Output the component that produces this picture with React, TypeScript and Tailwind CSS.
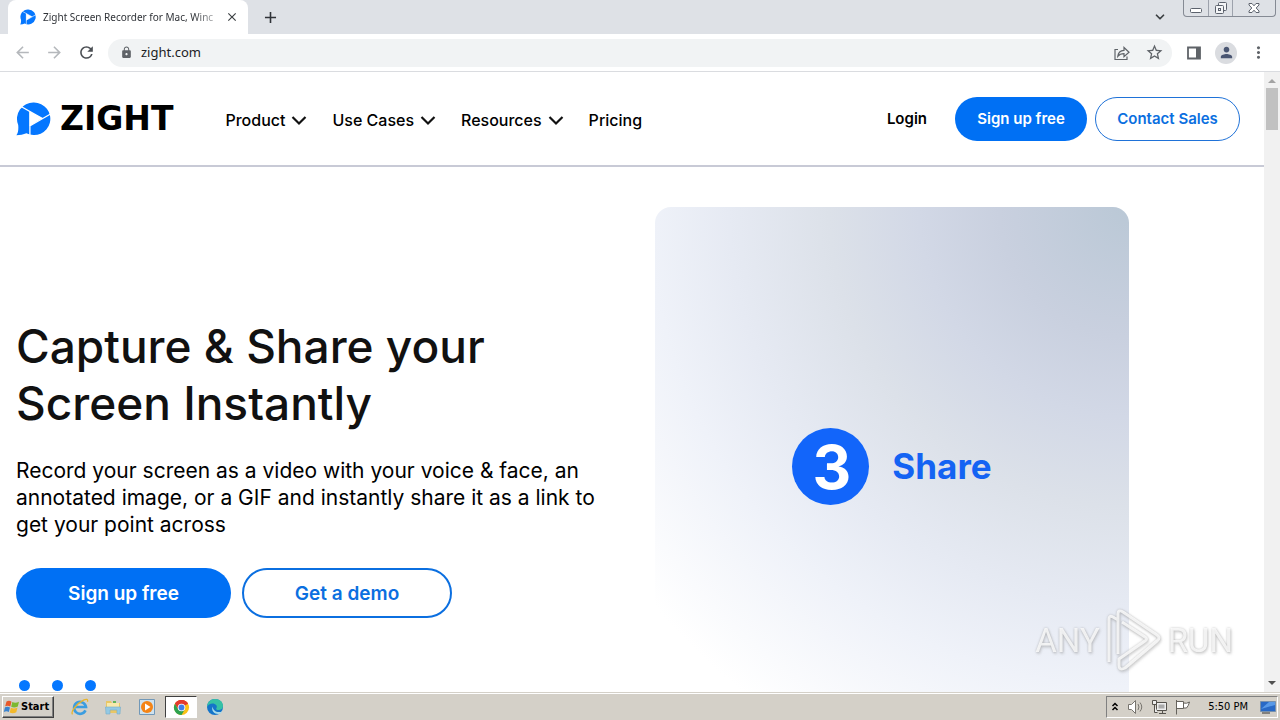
import React from "react";
import { ChevronDown } from "lucide-react";
import { MdArrowBack, MdArrowForward, MdRefresh, MdLock, MdStarBorder, MdPerson, MdMoreVert, MdClose, MdAdd } from "react-icons/md";

const UI_FONT = "font-['DejaVu_Sans_Condensed','Noto_Sans',sans-serif]";

function ZightMark({ className }: { className: string }) {
  return (
    <svg viewBox="0 0 35 34" className={className} aria-hidden="true">
      <path d="M18 0.5a16.3 16.3 0 1 1-7.6 30.7C7.400 32.500 4 33 0.400 33.200 2.200 30.800 2.600 27 2.200 23A16.300 16.300 0 0 1 18 0.500Z" fill="#0577ff" />
      <path d="M13.600 9.600v14.600L26.300 16.300Z" fill="#fff" />
      <path d="M5.500 4.800 26.500 16.600M34.500 12 13.300 24.300M13.900 9.500V33" stroke="#fff" strokeWidth="1.300" fill="none" />
    </svg>
  );
}

function TabStrip() {
  return (
    <div className="flex h-[34px] shrink-0 bg-[#dee1e6] pl-2">
      <div className="flex w-60 items-center rounded-t-lg bg-white pr-2 pl-3">
        <ZightMark className="h-4 w-4 shrink-0" />
        <span className="ml-[7px] flex-1 font-['Noto_Sans',sans-serif] text-[10px] whitespace-nowrap text-[#303338] [mask-image:linear-gradient(to_right,#000_85%,#0003)]">
          Zight Screen Recorder for Mac, Winc
        </span>
        <button aria-label="Close tab" className="ml-1 grid h-4 w-4 place-items-center text-[#3c4043]">
          <MdClose size={14} />
        </button>
      </div>
      <button aria-label="New tab" className="ml-3 grid w-5 place-items-center text-[#303338]">
        <MdAdd size={19} />
      </button>
      <div className="ml-auto flex pr-1">
        <button aria-label="Search tabs" className="mr-[15px] grid w-4 place-items-center text-[#3c4043]">
          <ChevronDown size={14} strokeWidth={3} />
        </button>
        <div className="flex h-[17px] overflow-hidden rounded-b-[4px] border border-t-0 border-[#858a94] text-[#5c626d]">
          <button aria-label="Minimize" className="grid w-6 place-items-center">
            <svg viewBox="0 0 24 16" className="h-4 w-6"><rect x="6.500" y="8.500" width="11" height="4" rx="1" fill="#fff" stroke="currentColor" /></svg>
          </button>
          <button aria-label="Restore" className="grid w-[25px] place-items-center border-x border-[#9da2ac]">
            <svg viewBox="0 0 24 16" className="h-4 w-6" fill="#f4f5f7" stroke="currentColor">
              <rect x="9.500" y="2.500" width="8" height="8" rx="1" />
              <rect x="6.500" y="5.500" width="8" height="8" rx="1" />
              <rect x="9.500" y="8.500" width="2" height="2" />
            </svg>
          </button>
          <button aria-label="Close window" className="grid w-[42px] place-items-center">
            <svg viewBox="0 0 24 16" className="h-4 w-6" fill="#fff" stroke="currentColor">
              <path d="M7 3.500h3l2 2.300 2-2.300h3v1.500L14.200 8l2.800 3v1.500h-3l-2-2.300-2 2.300H7V11l2.800-3L7 5Z" />
            </svg>
          </button>
        </div>
      </div>
    </div>
  );
}

function Toolbar() {
  return (
    <div className="flex h-[38px] shrink-0 items-center border-b border-[#dadce0] bg-white pr-3 pl-3 text-[#5f6368]">
      <button aria-label="Back" className="grid w-5 place-items-center text-[#b5b8bc]"><MdArrowBack size={19} /></button>
      <button aria-label="Forward" className="ml-3 grid w-5 place-items-center text-[#b5b8bc]"><MdArrowForward size={19} /></button>
      <button aria-label="Reload" className="ml-3 grid w-5 place-items-center text-[#4b4f54]"><MdRefresh size={19} /></button>
      <div className="ml-3 flex h-7 flex-1 items-center rounded-full bg-[#f1f3f4] pr-2 pl-3">
        <MdLock size={13} className="shrink-0" />
        <input aria-label="Address" defaultValue="zight.com" className="ml-2 min-w-0 flex-1 bg-transparent font-['Noto_Sans',sans-serif] text-[13px] text-[#202124] outline-none" />
        <button aria-label="Share page" className="mr-[14px]">
          <svg viewBox="0 0 18 18" className="h-[18px] w-[18px]" fill="none" stroke="currentColor" strokeWidth="1.200">
            <path d="M5 5.500H2v10h12v-3M4.800 12.300c.4-3.700 2.700-5.700 6.200-5.900V3.500l5 4.700-5 4.500V9.700c-2.800 0-4.700.8-6.200 2.600Z" />
          </svg>
        </button>
        <button aria-label="Bookmark"><MdStarBorder size={19} /></button>
      </div>
      <button aria-label="Side panel" className="ml-[14px]">
        <svg viewBox="0 0 16 16" className="h-4 w-4" fill="none"><path d="M2 2.500h12v11H2Z" stroke="currentColor" strokeWidth="1.800" /><path d="M10 2h4v12h-4Z" fill="currentColor" /></svg>
      </button>
      <button aria-label="Profile" className="ml-[13px] grid h-[22px] w-[22px] place-items-center rounded-full bg-[#dadce0] text-[#4a5672]"><MdPerson size={17} /></button>
      <button aria-label="Browser menu" className="ml-3"><MdMoreVert size={19} /></button>
    </div>
  );
}

function NavItem({ label, menu }: { label: string; menu?: boolean }) {
  return (
    <a href="#" className="flex items-center gap-[6px] text-black">
      {label}
      {menu && (
        <svg viewBox="0 0 16 16" className="h-4 w-4" fill="none" stroke="#111" strokeWidth="2.200"><path d="m1.500 5 6.500 6.500 6.500-6.500" /></svg>
      )}
    </a>
  );
}

function SiteHeader() {
  return (
    <header className="flex h-[95px] shrink-0 items-center border-b-2 border-[#c8cad6] pr-6 pl-4 text-[15px] font-semibold">
      <a href="#" aria-label="Zight" className="flex items-center gap-[9px] text-black">
        <ZightMark className="h-[34px] w-[35px]" />
        <span className="font-['DejaVu_Sans',sans-serif] text-[33px] leading-8 font-bold">ZIGHT</span>
      </a>
      <nav className="ml-[52px] flex items-center gap-[25px] pt-[2px] text-[16px] font-medium">
        <NavItem label="Product" menu />
        <NavItem label="Use Cases" menu />
        <NavItem label="Resources" menu />
        <NavItem label="Pricing" />
      </nav>
      <div className="ml-auto flex items-center">
        <a href="#" className="mr-7 pt-[2px] text-black">Login</a>
        <a href="#" className="grid h-11 w-33 place-items-center rounded-full bg-[#0070f4] pt-[2px] text-white">Sign up free</a>
        <a href="#" className="ml-2 grid h-11 w-[145px] place-items-center rounded-full border border-[#1f72d8] pt-[2px] text-[#0b6fe0]">Contact Sales</a>
      </div>
    </header>
  );
}

function Hero() {
  return (
    <section className="grid max-w-[1145px] grid-cols-[minmax(0,639fr)_minmax(0,474fr)] px-4 pt-10">
      <div className="pt-[111px]">
        <h1 className="text-[46px] leading-[57px] font-medium text-[#111]">
          Capture &amp; Share your
          <br />
          Screen Instantly
        </h1>
        <p className="mt-[25px] text-[21px] leading-[27px] text-black">
          Record your screen as a video with your voice &amp; face, an
          <br />
          annotated image, or a GIF and instantly share it as a link to
          <br />
          get your point across
        </p>
        <div className="mt-[30px] flex gap-[11px] text-[19px] font-semibold">
          <a href="#" className="grid h-[50px] w-[215px] place-items-center rounded-full bg-[#0070f4] pt-[2px] text-white">Sign up free</a>
          <a href="#" className="grid h-[50px] w-[210px] place-items-center rounded-full border-2 border-[#0b6fe0] pt-[2px] text-[#0b6fe0]">Get a demo</a>
        </div>
        <div className="mt-[62px] flex gap-[22px] pl-[3px]">
          <span className="h-[11px] w-[11px] rounded-full bg-[#0577ff]" />
          <span className="h-[11px] w-[11px] rounded-full bg-[#0577ff]" />
          <span className="h-[11px] w-[11px] rounded-full bg-[#0577ff]" />
        </div>
      </div>
      <div className="flex h-[518px] items-center justify-center gap-[23px] rounded-2xl bg-[radial-gradient(circle_at_top_right,#bac8d6_0px,#c9d0df_130px,#d2d8e6_210px,#dce1e9_300px,#e6eaf3_400px,#eff2f9_480px,#fff_620px)] text-[#1463f3]">
        <span className="grid h-[77px] w-[77px] place-items-center rounded-full bg-[#1265fa] pt-[2px] pl-[2px] text-[60px] leading-none font-bold text-white">3</span>
        <span className="text-[35px] font-bold">Share</span>
      </div>
    </section>
  );
}

function Scrollbar() {
  return (
    <div aria-hidden="true" className="flex w-4 shrink-0 flex-col items-center bg-[#f1f1f1]">
      <svg viewBox="0 0 16 16" className="h-4 w-4"><path d="m4 11 4-4 4 4Z" fill="#a3a3a3" /></svg>
      <div className="h-[42px] w-3 bg-[#c1c1c1]" />
      <svg viewBox="0 0 16 16" className="mt-auto h-4 w-4"><path d="m4 5 4 4 4-4Z" fill="#505050" /></svg>
    </div>
  );
}

function Watermark() {
  return (
    <div className="pointer-events-none absolute right-[47px] bottom-5 flex items-center gap-[5px] font-['Roboto',sans-serif] text-[33px] leading-none font-normal text-white/80 [filter:drop-shadow(0_0_1px_#7778)_drop-shadow(1px_2px_1px_#8885)]">
      <span>ANY</span>
      <svg viewBox="0 0 58 64" className="h-16 w-[58px]" fill="none" stroke="#fff" strokeOpacity=".8" strokeWidth="3" strokeLinejoin="round">
        <path d="M4 54V11q0-4 4-2l5 3v34M13 32V6q0-5 5-2l34 23q4 3 0 6L20 60q-6 3-6-3V51l26-18q3-2 0-4L17 14" />
      </svg>
      <span>RUN</span>
    </div>
  );
}

function IeIcon() {
  return (
    <svg viewBox="0 0 18 18" className="h-[18px] w-[18px]" fill="none">
      <path d="M14.500 12.400A6 6 0 1 1 15 9H4" stroke="#3b9de0" strokeWidth="2.600" />
      <path d="M1.500 16.300C-.8 13.500 6 5.600 12.500 2.200c3-1.500 4.800-1 3.900 1.600" stroke="#e9b52b" strokeWidth="1.300" />
    </svg>
  );
}

function FolderIcon() {
  return (
    <svg viewBox="0 0 18 18" className="h-[18px] w-[18px]">
      <path d="M2 3h5l1 2h8v10H2Z" fill="#e9c765" />
      <path d="M3 5h12v7H3Z" fill="#f8e9ac" />
      <path d="M1.500 9h15l-.5 7h-3v-4H6v4H2Z" fill="#93c9e4" stroke="#76adc9" strokeWidth=".6" />
      <path d="M9 3h3v2H9Z" fill="#62b45b" />
    </svg>
  );
}

function MediaIcon() {
  return (
    <svg viewBox="0 0 18 18" className="h-[18px] w-[18px]">
      <path d="M1.500 1.500h15v15h-15Z" fill="#cfe2ee" stroke="#7198b8" />
      <circle cx="9" cy="9" r="6" fill="#f48416" />
      <path d="m7 5.500 5.500 3.500L7 12.500Z" fill="#fff" />
    </svg>
  );
}

function ChromeIcon() {
  return (
    <svg viewBox="0 0 18 18" className="h-[17px] w-[17px]">
      <circle cx="9" cy="9" r="8" fill="#fbc116" />
      <path d="M9 9 2.070 5A8 8 0 0 1 15.930 5Z" fill="#e33b2e" />
      <path d="M9 5h6.930A8 8 0 0 0 2.070 5L5.500 11Z" fill="#e33b2e" />
      <path d="M2.070 5A8 8 0 0 0 9 17l3.460-6L9 12.500 5.540 11Z" fill="#2da24f" />
      <circle cx="9" cy="9" r="4" fill="#fff" />
      <circle cx="9" cy="9" r="3.100" fill="#3f7ee8" />
    </svg>
  );
}

function EdgeIcon() {
  return (
    <svg viewBox="0 0 18 18" className="h-[18px] w-[18px]">
      <circle cx="9" cy="9" r="8" fill="#1474c9" />
      <path d="M1 9C1.300 4 4.500 1 9 1c5 0 8 3.200 8 7 0 2.600-2 4-4.300 4-2 0-3-.8-2.400-1.600C12 8 9.500 5.500 6.500 5.500 4 5.500 2 6.800 1 9Z" fill="#35c1a5" />
      <path d="M6.600 8.500c-1.600 4.500 2 8 6.400 7.400 1.500-.3 2.700-1.400 3.300-2.500-5 2-9.300-.4-9.700-4.900Z" fill="#a9dbea" />
    </svg>
  );
}

function Taskbar() {
  return (
    <footer className="flex h-7 shrink-0 items-center border-t border-[#d4d0c8] bg-[#d4d0c8] pt-[1px] pr-[2px] pl-[2px] shadow-[inset_0_1px_0_#fff]">
      <button className="flex h-[22px] w-[52px] items-center border border-t-white border-r-[#404040] border-b-[#404040] border-l-white text-[11px] font-bold text-black shadow-[inset_-1px_-1px_0_#808080]">
        <svg viewBox="0 0 18 16" className="h-4 w-[18px] shrink-0">
          <path d="M3.500 2.500c2-1 3.500-.8 5 .2L7.300 7.500c-1.700-1-3.400-1-5.100-.3Z" fill="#e8592b" />
          <path d="M9.300 3c2 1 4 1 6.700-.2l-1.200 4.700c-2.500 1.200-4.700 1.200-6.600.2Z" fill="#7cb82f" />
          <path d="M2 8.200c1.700-.8 3.400-.7 5 .2l-1.200 4.700c-1.500-1-3-1-5-.2Z" fill="#3a83cf" />
          <path d="M7.900 8.800c2 1 4.100.9 6.600-.2l-1.200 4.600c-2.300 1.200-4.500 1.200-6.600.3Z" fill="#f3b92b" />
        </svg>
        Start
      </button>
      <div className="flex items-center pl-[17px]">
        <button aria-label="Internet Explorer" className="mr-[15px]"><IeIcon /></button>
        <button aria-label="File Explorer" className="mr-4"><FolderIcon /></button>
        <button aria-label="Media Player" className="mr-[9px]"><MediaIcon /></button>
        <button aria-label="Chrome" className="mr-[9px] grid h-[22px] w-8 place-items-center border border-t-[#404040] border-r-white border-b-white border-l-[#404040] bg-white"><ChromeIcon /></button>
        <button aria-label="Edge"><EdgeIcon /></button>
      </div>
      <div className="ml-auto flex h-[22px] items-center border border-t-[#808080] border-r-white border-b-white border-l-[#808080] pr-[1px] pl-1 text-[11px] text-black">
        <svg viewBox="0 0 8 12" className="h-3 w-2" fill="none" stroke="#000" strokeWidth="1.500"><path d="m1.500 5 2.500-2.500L6.500 5m-5 4L4 6.500 6.500 9" /></svg>
        <svg viewBox="0 0 18 16" className="ml-2 h-4 w-[18px]" fill="#fff" stroke="#77746e"><path d="M1.500 5.500h3l4-4v13l-4-4h-3Z" /><path d="M11 5q2 3 0 6M13 3.500q3.500 4.500 0 9" fill="none" /></svg>
        <svg viewBox="0 0 18 16" className="ml-[6px] h-4 w-[18px]" fill="#eee" stroke="#55524d"><path d="M5.500 3.500h10v8h-10ZM8 14.500h7M11.500 12v2" /><path d="M7.500 5.500h6v4h-6Z" fill="#aaa" stroke="none" /><path d="M1.500 1.500h4v4h-4ZM3.500 5.500v8h3" /></svg>
        <svg viewBox="0 0 18 16" className="ml-[5px] h-4 w-[18px]" fill="#fff" stroke="#66635d"><path d="M2.500 1v14.500M2.500 2.500h7v7h-7M9.500 4q3 1 6-1-1 4-3 6h-3" /></svg>
        <span className="ml-4">5:50 PM</span>
        <svg viewBox="0 0 16 16" className="ml-3 h-4 w-4"><path d="M.5 2.500h15v10H.5Z" fill="#2869c6" stroke="#7790ac" /><path d="m1 10 8-7h6v3Z" fill="#5899e7" /><path d="M2 14h8" stroke="#333" /></svg>
      </div>
    </footer>
  );
}

export default function App() {
  return (
    <div className={`flex h-screen flex-col overflow-hidden bg-white ${UI_FONT}`}>
      <TabStrip />
      <Toolbar />
      <div className="relative flex min-h-0 flex-1">
        <main className="min-w-0 flex-1 overflow-hidden font-['Inter',sans-serif]">
          <SiteHeader />
          <Hero />
        </main>
        <Scrollbar />
        <Watermark />
      </div>
      <Taskbar />
    </div>
  );
}
